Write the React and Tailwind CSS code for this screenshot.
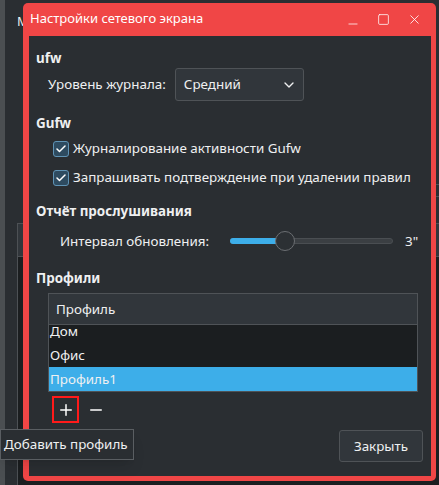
import React from "react";
import { ChevronDown, Check, Minus, Plus, X, Square } from "lucide-react";

const font = { fontFamily: '"Noto Sans", "DejaVu Sans", sans-serif' };

const CheckRow = ({ label }) => (
  <div className="flex items-center h-[29px] pl-[24px]">
    <div className="w-[16px] h-[16px] rounded-[3px] border border-[#5f93b5] bg-[#2e4b60] flex items-center justify-center">
      <Check className="w-[12px] h-[12px] text-white" strokeWidth={3} />
    </div>
    <span className="ml-[4px] text-[13.4px] text-[#eff0f1]">{label}</span>
  </div>
);

const SectionTitle = ({ children }) => (
  <div className="pl-[7px] text-[13.4px] font-bold text-[#eff0f1] leading-[18px]">
    {children}
  </div>
);

export default function App() {
  return (
    <div
      className="relative w-[439px] h-[485px] overflow-hidden bg-[#2a2e32] text-[#eff0f1]"
      style={font}
    >
      {/* background window */}
      <div className="absolute left-0 top-0 w-[5px] h-full bg-[#4b4f52]" />
      <div className="absolute left-[17px] top-[12px] text-[13px] text-[#eff0f1]">
        M
      </div>
      <div className="absolute left-[17px] top-[223px] w-[430px] h-[262px] border-l border-t border-[#4d5155]">
        <div className="h-[33px] border-b border-[#4d5155] bg-[#31363b]" />
        <div className="h-full bg-[#1b1e20]" />
      </div>
      <div className="absolute left-[436px] top-[184px] w-[3px] h-[13px] border-y border-[#4d5155]" />

      {/* dialog */}
      <div className="absolute left-[23px] top-[3px] w-[413px] h-[478px] bg-[#f04646] rounded-[5px] flex flex-col">
        <div className="h-[32px] flex items-center pl-[7px] pr-[14px]">
          <span className="text-[13px] text-white flex-1">
            Настройки сетевого экрана
          </span>
          <div className="flex items-center gap-[17px] text-white">
            <Minus className="w-[14px] h-[14px] translate-y-[5px]" strokeWidth={1.3} />
            <Square className="w-[13px] h-[13px]" strokeWidth={1.4} />
            <X className="w-[15px] h-[15px]" strokeWidth={1.3} />
          </div>
        </div>
        <div className="flex-1 ml-[6px] mr-[5px] mb-[5px] mt-[1px] bg-[#2a2e32] flex flex-col pt-[13px]">
          <SectionTitle>ufw</SectionTitle>
          <div className="flex items-center mt-[1px] h-[33px] pl-[19px]">
            <span className="text-[13.4px] text-[#eff0f1]">Уровень журнала:</span>
            <div className="ml-[9px] w-[129px] h-[33px] rounded-[3px] border border-[#4f5357] bg-[#31363b] flex items-center pl-[8px] pr-[6px]">
              <span className="text-[13.4px] flex-1">Средний</span>
              <ChevronDown className="w-[16px] h-[16px] text-[#eff0f1]" strokeWidth={2} />
            </div>
          </div>
          <div className="mt-[13px]">
            <SectionTitle>Gufw</SectionTitle>
          </div>
          <div className="mt-[2px]">
            <CheckRow label="Журналирование активности Gufw" />
            <CheckRow label="Запрашивать подтверждение при удалении правил" />
          </div>
          <div className="mt-[10px]">
            <SectionTitle>Отчёт прослушивания</SectionTitle>
          </div>
          <div className="flex items-center h-[24px] mt-[9px] pl-[31px]">
            <span className="text-[13.4px] text-[#eff0f1]">Интервал обновления:</span>
            <div className="relative ml-[21px] w-[163px] h-[6px] rounded-full bg-[#3b3f43] border border-[#4a4e52]">
              <div className="absolute left-[-1px] top-[-1px] h-[6px] w-[48px] rounded-full bg-[#3daee9]" />
              <div className="absolute left-[44px] top-[-8px] w-[20px] h-[20px] rounded-full bg-[#2c3034] border border-[#6b6e72]" />
            </div>
            <span className="ml-[12px] text-[13.4px]">3"</span>
          </div>
          <div className="mt-[16px]">
            <SectionTitle>Профили</SectionTitle>
          </div>
          <div className="ml-[19px] mr-[13px] mt-[6px] border border-[#4f5357]">
            <div className="h-[31px] bg-[#31363b] border-b border-[#4f5357] flex items-center pl-[7px] text-[13.4px]">
              Профиль
            </div>
            <div className="h-[66px] bg-[#1b1e20] overflow-hidden flex flex-col text-[13.4px]">
              <div className="h-[24px] shrink-0 flex items-center pl-[1px] -mt-[6px]">
                Дом
              </div>
              <div className="h-[24px] shrink-0 flex items-center pl-[1px]">
                Офис
              </div>
              <div className="h-[24px] shrink-0 flex items-center pl-[1px] bg-[#3daee9]">
                Профиль1
              </div>
            </div>
          </div>
          <div className="flex items-center ml-[23px] mt-[4px] gap-[8px]">
            <div className="w-[27px] h-[27px] border-2 border-[#ff1a1a] flex items-center justify-center">
              <Plus className="w-[18px] h-[18px] text-white" strokeWidth={2} />
            </div>
            <Minus className="w-[18px] h-[18px] text-white" strokeWidth={2} />
          </div>
          <div className="flex-1" />
          <div className="flex justify-end pr-[8px] pb-[14px]">
            <div className="w-[84px] h-[32px] rounded-[3px] border border-[#4f5357] bg-[#31363b] flex items-center justify-center text-[13.4px]">
              Закрыть
            </div>
          </div>
        </div>
      </div>

      {/* tooltip */}
      <div className="absolute left-0 top-[429px] w-[134px] h-[31px] bg-[#2a2e32] border border-[#5a5e62] flex items-center pl-[3px] text-[13.4px] text-[#eff0f1] shadow-lg">
        Добавить профиль
      </div>
    </div>
  );
}
